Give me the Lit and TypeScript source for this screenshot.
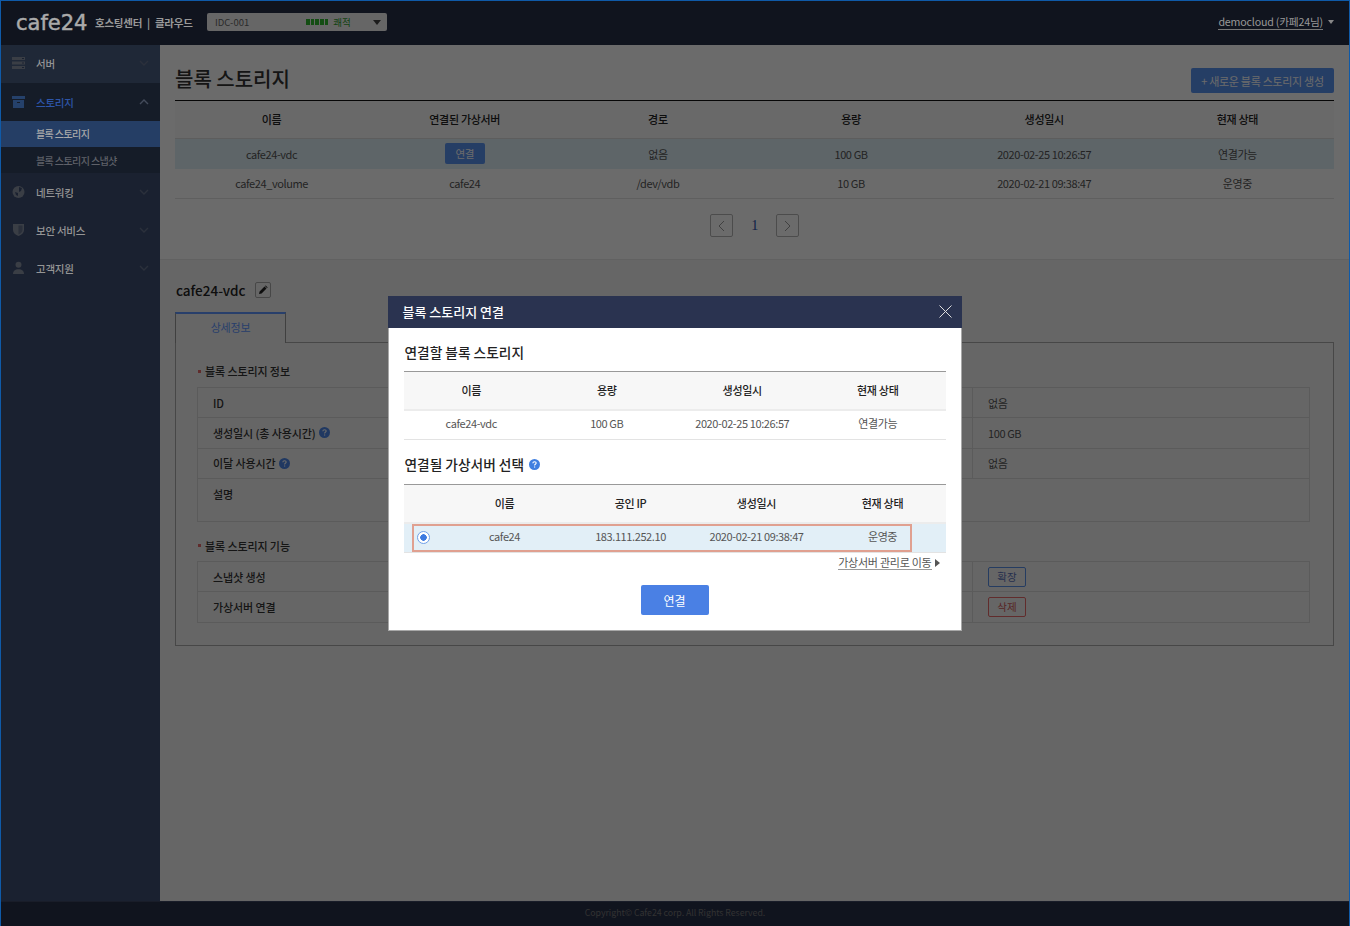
import { LitElement, css, html, svg } from "lit";
import { customElement } from "lit/decorators.js";

const chevron = (up = false) => html`<svg class="chev" viewBox="0 0 10 6" width="10" height="6">
  <path d=${up ? "M1 5l4-4 4 4" : "M1 1l4 4 4-4"} fill="none" stroke="currentColor" stroke-width="1.4" />
</svg>`;

const icons = {
  server: svg`<path d="M0 1h13v3H0zM0 5.500h13v3H0zM0 10h13v3H0z" fill="currentColor"/><path d="M10 2.500h2M10 7h2M10 11.500h2" stroke="#3e4f72"/>`,
  box: svg`<path d="M0 1h13v3H0z" fill="currentColor"/><path d="M1 5h11v8H1z" fill="currentColor"/><path d="M5 7h3v1H5z" fill="#34435f"/>`,
  globe: svg`<circle cx="6.500" cy="7" r="6" fill="currentColor"/><path d="M7 2l3 1-1 3-2 1zM3 7l3 1 0 3-2-1z" fill="#3e4f72"/>`,
  shield: svg`<path d="M1 1h11v6c0 3-2.500 5-5.500 6C3.500 12 1 10 1 7z" fill="currentColor"/><path d="M6.500 2.500h4V7c0 2-2 3.700-4 4.500z" fill="#3e4f72" opacity=".5"/>`,
  person: svg`<circle cx="6.500" cy="3.800" r="3" fill="currentColor"/><path d="M1 13c0-3 2-4.800 5.500-4.800S12 10 12 13z" fill="currentColor"/>`,
};

const menuIcon = (body: unknown) => html`<svg class="menu-icon" viewBox="0 0 13 14" width="13" height="14">${body}</svg>`;

const help = html`<svg class="help" viewBox="0 0 11 11" width="11" height="11">
  <circle cx="5.500" cy="5.500" r="5.500" fill="currentColor" />
  <path d="M3.800 4.200c.1-1 .8-1.500 1.700-1.500s1.700.5 1.700 1.400c0 1.200-1.600 1.200-1.600 2.300" fill="none" stroke="#fff" stroke-width="1.100" />
  <path d="M5 7.400h1.200v1.200H5z" fill="#fff" />
</svg>`;

@customElement("app-root")
export class AppRoot extends LitElement {
  static styles = css`
    :host {
      display: block;
      height: 100vh;
      font-family: "Noto Sans CJK KR", "Noto Sans", sans-serif;
      font-size: 11px;
      letter-spacing: -0.4px;
      color: #555;
    }
    * {
      box-sizing: border-box;
    }
    .app {
      position: relative;
      display: flex;
      flex-direction: column;
      height: 100%;
      border: 1px solid #0f5aa8;
      border-bottom: 0;
      overflow: hidden;
    }
    /* text that stays bright on the dark chrome while the dialog is open */
    .lit {
      position: relative;
      z-index: 11;
    }

    /* top bar */
    .topbar {
      display: flex;
      align-items: center;
      flex: none;
      height: 44px;
      padding: 0 15px 2px;
      background: #273049;
      color: #fff;
    }
    .logo {
      width: 79px;
      padding-top: 2px;
      font-family: "DejaVu Sans", sans-serif;
      font-size: 21px;
      font-weight: 400;
      letter-spacing: 0;
      color: #aaa;
      -webkit-text-stroke: 0.5px #aaa;
    }
    .product {
      font-size: 10.500px;
      font-weight: 700;
      letter-spacing: -0.25px;
      display: flex;
      gap: 5px;
      width: 112px;
      color: #999;
    }
    .idc {
      display: flex;
      align-items: center;
      width: 180px;
      height: 18px;
      padding: 0 6px 0 8px;
      background: #f4f4f4;
      border-radius: 2px;
      font-size: 9.500px;
      letter-spacing: 0;
      color: #666;
    }
    .idc .bars {
      margin-left: 57px;
      display: flex;
      gap: 1px;
    }
    .idc .bars i {
      width: 3.600px;
      height: 6px;
      background: #2eb82e;
    }
    .idc .state {
      margin-left: 5px;
      color: #2e9e2e;
      flex: 1;
    }
    .caret {
      width: 0;
      height: 0;
      border-left: 4px solid transparent;
      border-right: 4px solid transparent;
      border-top: 5px solid #444;
    }
    .user {
      margin-left: auto;
      display: flex;
      align-items: center;
      gap: 5px;
      font-size: 10.700px;
      letter-spacing: -0.2px;
      color: #999;
    }
    .user span {
      border-bottom: 1px solid #777;
      line-height: 15px;
    }
    .user .caret {
      border-left-width: 3.500px;
      border-right-width: 3.500px;
      border-top: 4px solid #888;
    }

    .body {
      flex: 1;
      display: flex;
      min-height: 0;
    }

    /* side menu */
    .side {
      flex: none;
      width: 159px;
      background: #3e4f72;
    }
    .menu {
      display: flex;
      align-items: center;
      height: 38px;
      padding: 0 11px;
      color: #959595;
      font-size: 10.500px;
      font-weight: 500;
      letter-spacing: -0.25px;
    }
    .menu.hover {
      padding-bottom: 2px;
      background: #4a5f83;
    }
    .menu.open {
      background: #34435f;
      color: #2d55a8;
    }
    .menu-icon {
      flex: none;
      margin-right: 11px;
      color: #8a93a5;
    }
    .menu.open .menu-icon {
      color: #5a9bff;
    }
    .chev {
      margin-left: auto;
      color: #66748e;
    }
    .menu.open .chev {
      color: #9fb4d8;
    }
    .sub {
      display: flex;
      align-items: center;
      height: 26px;
      padding-left: 35px;
      background: #34435f;
      color: #5f6169;
      font-size: 10px;
      font-weight: 500;
      letter-spacing: -0.6px;
    }
    .sub.active {
      background: #5a93f0;
      color: #aaa;
      padding-bottom: 1px;
    }

    /* content */
    .main {
      flex: 1;
      min-width: 0;
      background: #f3f3f3;
    }
    .list {
      height: 215px;
      padding: 0 15px;
      background: #fff;
      border-bottom: 1px solid #e6e6e6;
    }
    .title-row {
      display: flex;
      justify-content: space-between;
      align-items: flex-start;
      height: 55px;
      padding-top: 23px;
    }
    h1 {
      margin: -4px 0 0;
      font-size: 20px;
      font-weight: 500;
      line-height: 30px;
      letter-spacing: 0;
      color: #333;
    }
    .btn-new {
      height: 25px;
      width: 143px;
      padding: 0;
      border: 0;
      border-radius: 2px;
      background: #5a93f0;
      color: #fff;
      font: inherit;
      font-size: 11px;
      letter-spacing: -0.3px;
      white-space: nowrap;
    }
    table {
      width: 100%;
      border-collapse: collapse;
      table-layout: fixed;
      text-align: center;
    }
    th {
      padding: 0;
      font-weight: 500;
      color: #222;
      font-size: 11px;
      letter-spacing: -0.3px;
    }
    td {
      padding: 0;
    }
    .list-table {
      border-top: 1px solid #111;
    }
    .list-table th {
      height: 38px;
      padding-bottom: 2px;
      border-bottom: 1px solid #ddd;
      background: #fbfbfb;
    }
    .list-table td {
      height: 30px;
      border-bottom: 1px solid #e3e3e3;
    }
    .list-table tr.on td {
      background: #dff0f8;
      border-bottom: 0;
    }
    .link-btn {
      display: inline-block;
      width: 40px;
      height: 21px;
      line-height: 21px;
      border-radius: 2px;
      background: #5a93f0;
      color: #fff;
      font-size: 10.500px;
      vertical-align: middle;
    }
    .pager {
      display: flex;
      justify-content: center;
      align-items: center;
      margin-top: 15px;
    }
    .pager button {
      display: flex;
      align-items: center;
      justify-content: center;
      width: 23px;
      height: 23px;
      padding: 0;
      border: 1px solid #b5b5b5;
      border-radius: 2px;
      background: transparent;
      color: #999;
    }
    .pager b {
      width: 43px;
      text-align: center;
      font-family: "Liberation Serif", serif;
      font-weight: 400;
      font-size: 14px;
      color: #2a50a8;
    }
    .detail {
      padding: 0 15px;
      height: 408px;
    }
    .detail-head {
      display: flex;
      align-items: center;
      gap: 9px;
      height: 52px;
      padding-top: 8px;
    }
    h2 {
      margin: 0 0 0 1px;
      font-size: 13.500px;
      font-weight: 500;
      letter-spacing: 0;
      color: #222;
    }
    .edit {
      display: flex;
      align-items: center;
      justify-content: center;
      width: 16px;
      height: 16px;
      border: 1px solid #aaa;
      border-radius: 2px;
      color: #222;
    }
    .tab {
      position: relative;
      width: 111px;
      height: 31px;
      margin-bottom: -1px;
      border: 1px solid #999;
      border-top: 2px solid #5f96ff;
      border-bottom: 0;
      background: #f3f3f3;
      color: #5f96ff;
      text-align: center;
      font-size: 11px;
      letter-spacing: -0.2px;
      line-height: 27px;
    }
    .panel {
      height: 304px;
      padding: 20px 23px 0 21px;
      border: 1px solid #aaa;
    }
    .sec-label {
      display: flex;
      align-items: center;
      height: 16px;
      font-size: 11px;
      font-weight: 500;
      letter-spacing: -0.1px;
      color: #333;
    }
    .sec-label::before {
      content: "";
      width: 3px;
      height: 3px;
      margin: 0 4px 0 1px;
      background: #e46a6a;
    }
    .sec-label.second {
      margin-top: 16px;
    }
    .info {
      margin-top: 8px;
      border: 1px solid #d8d8d8;
      border-bottom: 0;
    }
    .sec-label.second + .info {
      margin-top: 7px;
    }
    .info-row {
      display: grid;
      grid-template-columns: 190px 1fr 337px;
      align-items: stretch;
      height: 30.330px;
      border-bottom: 1px solid #d8d8d8;
    }
    .info-row.tall {
      height: 43px;
    }
    .info-row > div {
      display: flex;
      align-items: center;
      gap: 3px;
      padding-left: 15px;
    }
    .info-row .key {
      font-weight: 500;
      font-size: 11px;
      letter-spacing: -0.1px;
      color: #333;
      white-space: nowrap;
    }
    .info-row .val {
      border-left: 1px solid #d8d8d8;
    }
    .info-row.tall .key {
      align-items: flex-start;
      padding-top: 7px;
    }
    .info-row.tall .val {
      border-left: 0;
    }
    .help {
      color: #4d87e8;
      flex: none;
    }
    .outline {
      width: 38px;
      height: 20px;
      padding: 0;
      border: 1px solid #5a8fe8;
      border-radius: 2px;
      background: transparent;
      color: #5a70b8;
      font: inherit;
      font-size: 10.500px;
    }
    .outline.red {
      border-color: #e86a6a;
      color: #d05a5a;
    }
    .copyright {
      flex: none;
      height: 25px;
      border-top: 1px solid #3c4763;
      background: #273049;
      color: #777;
      text-align: center;
      font-size: 8.800px;
      letter-spacing: -0.05px;
      line-height: 21px;
    }

    /* dialog */
    .overlay {
      position: absolute;
      inset: 0;
      z-index: 10;
      display: flex;
      justify-content: center;
      align-items: flex-start;
      padding-top: 295px;
      background: rgba(0, 0, 0, 0.58);
    }
    .dialog {
      width: 574px;
      height: 335px;
      margin-left: -1px;
      border: 1px solid #a8a8a8;
      border-top: 0;
      background: #fff;
    }
    .dialog-head {
      display: flex;
      align-items: center;
      justify-content: space-between;
      height: 32px;
      margin: 0 -1px;
      padding: 0 10px 2px 15px;
      background: #2a3350;
      color: #fff;
      font-size: 13px;
      font-weight: 500;
      letter-spacing: 0;
    }
    .dialog-body {
      padding: 0 15px;
    }
    h3 {
      display: flex;
      align-items: center;
      gap: 4px;
      margin: 0;
      height: 43px;
      padding: 4px 0 0 1px;
      font-size: 13.700px;
      font-weight: 500;
      letter-spacing: 0;
      color: #222;
    }
    .pick + h3 {
      height: 44px;
    }
    h3 .help {
      margin-left: 1px;
      color: #3f7fe0;
    }
    .pick {
      border-top: 1px solid #999;
    }
    .pick th {
      height: 38px;
      background: #f7f7f7;
      border-bottom: 2px solid #ececec;
    }
    .pick td {
      height: 30px;
      padding-bottom: 4px;
      border-bottom: 1px solid #e3e3e3;
    }
    .servers {
      position: relative;
    }
    .servers tr.on td {
      background: #e2eff7;
    }
    .radio {
      display: inline-block;
      width: 13px;
      height: 13px;
      margin-left: 1px;
      border: 1px solid #6f9fe8;
      border-radius: 50%;
      background: radial-gradient(circle, #3d7ae0 0 3px, #fff 3.500px);
      vertical-align: middle;
    }
    .mark {
      position: absolute;
      left: 8px;
      top: 40px;
      width: 500px;
      height: 28px;
      border: 2px solid #e0a090;
      pointer-events: none;
    }
    .goto {
      display: flex;
      justify-content: flex-end;
      align-items: center;
      gap: 3px;
      height: 20px;
      padding-right: 6px;
      font-size: 11px;
      letter-spacing: -0.25px;
      color: #555;
    }
    .goto span {
      border-bottom: 1px solid #999;
      line-height: 13px;
    }
    .goto i {
      width: 0;
      height: 0;
      border-top: 4px solid transparent;
      border-bottom: 4px solid transparent;
      border-left: 5px solid #555;
    }
    .actions {
      display: flex;
      justify-content: center;
      margin-top: 12px;
    }
    .confirm {
      width: 68px;
      height: 30px;
      border: 0;
      border-radius: 2px;
      background: #4a80e4;
      color: #fff;
      font: inherit;
      font-size: 12px;
      letter-spacing: 0;
    }
  `;

  render() {
    return html`
      <div class="app">
        <header class="topbar">
          <div class="logo lit">cafe24</div>
          <div class="product lit"><span>호스팅센터</span><span>|</span><span>클라우드</span></div>
          <div class="idc">
            <span>IDC-001</span>
            <span class="bars"><i></i><i></i><i></i><i></i><i></i></span>
            <span class="state">쾌적</span>
            <span class="caret"></span>
          </div>
          <div class="user lit"><span>democloud (카페24님)</span><i class="caret"></i></div>
        </header>
        <div class="body">
          <nav class="side">
            <div class="menu hover">${menuIcon(icons.server)}<span class="lit">서버</span>${chevron()}</div>
            <div class="menu open">${menuIcon(icons.box)}<span class="lit">스토리지</span>${chevron(true)}</div>
            <div class="sub active"><span class="lit">블록 스토리지</span></div>
            <div class="sub"><span class="lit">블록 스토리지 스냅샷</span></div>
            <div class="menu">${menuIcon(icons.globe)}<span class="lit">네트워킹</span>${chevron()}</div>
            <div class="menu">${menuIcon(icons.shield)}<span class="lit">보안 서비스</span>${chevron()}</div>
            <div class="menu">${menuIcon(icons.person)}<span class="lit">고객지원</span>${chevron()}</div>
          </nav>
          <main class="main">
            <section class="list">
              <div class="title-row">
                <h1>블록 스토리지</h1>
                <button class="btn-new">+ 새로운 블록 스토리지 생성</button>
              </div>
              <table class="list-table">
                <thead>
                  <tr>
                    <th>이름</th>
                    <th>연결된 가상서버</th>
                    <th>경로</th>
                    <th>용량</th>
                    <th>생성일시</th>
                    <th>현재 상태</th>
                  </tr>
                </thead>
                <tbody>
                  <tr class="on">
                    <td>cafe24-vdc</td>
                    <td><span class="link-btn">연결</span></td>
                    <td>없음</td>
                    <td>100 GB</td>
                    <td>2020-02-25 10:26:57</td>
                    <td>연결가능</td>
                  </tr>
                  <tr>
                    <td>cafe24_volume</td>
                    <td>cafe24</td>
                    <td>/dev/vdb</td>
                    <td>10 GB</td>
                    <td>2020-02-21 09:38:47</td>
                    <td>운영중</td>
                  </tr>
                </tbody>
              </table>
              <div class="pager">
                <button>
                  <svg viewBox="0 0 7 12" width="7" height="12"><path d="M6 1L1 6l5 5" fill="none" stroke="currentColor" /></svg>
                </button>
                <b>1</b>
                <button>
                  <svg viewBox="0 0 7 12" width="7" height="12"><path d="M1 1l5 5-5 5" fill="none" stroke="currentColor" /></svg>
                </button>
              </div>
            </section>
            <section class="detail">
              <div class="detail-head">
                <h2>cafe24-vdc</h2>
                <span class="edit">
                  <svg viewBox="0 0 10 10" width="10" height="10"><path d="M1 9l.6-2.600L6.500 1.500l2 2L3.600 8.400zM7 1l.7-.6 2 2L9 3z" fill="currentColor" /></svg>
                </span>
              </div>
              <div class="tab">상세정보</div>
              <div class="panel">
                <div class="sec-label">블록 스토리지 정보</div>
                <div class="info">
                  <div class="info-row"><div class="key">ID</div><div></div><div class="val">없음</div></div>
                  <div class="info-row"><div class="key">생성일시 (총 사용시간) ${help}</div><div></div><div class="val">100 GB</div></div>
                  <div class="info-row"><div class="key">이달 사용시간 ${help}</div><div></div><div class="val">없음</div></div>
                  <div class="info-row tall"><div class="key">설명</div><div></div><div class="val"></div></div>
                </div>
                <div class="sec-label second">블록 스토리지 기능</div>
                <div class="info">
                  <div class="info-row"><div class="key">스냅샷 생성</div><div></div><div class="val"><button class="outline">확장</button></div></div>
                  <div class="info-row"><div class="key">가상서버 연결</div><div></div><div class="val"><button class="outline red">삭제</button></div></div>
                </div>
              </div>
            </section>
          </main>
        </div>
        <footer class="copyright">Copyright© Cafe24 corp. All Rights Reserved.</footer>

        <div class="overlay">
          <div class="dialog">
            <div class="dialog-head">
              <span>블록 스토리지 연결</span>
              <svg viewBox="0 0 13 13" width="13" height="13"><path d="M.5.5l12 12M12.500.5l-12 12" stroke="#ddd" fill="none" /></svg>
            </div>
            <div class="dialog-body">
              <h3>연결할 블록 스토리지</h3>
              <table class="pick">
                <thead>
                  <tr><th>이름</th><th>용량</th><th>생성일시</th><th>현재 상태</th></tr>
                </thead>
                <tbody>
                  <tr>
                    <td>cafe24-vdc</td>
                    <td>100 GB</td>
                    <td>2020-02-25 10:26:57</td>
                    <td>연결가능</td>
                  </tr>
                </tbody>
              </table>
              <h3>연결될 가상서버 선택 ${help}</h3>
              <div class="servers">
                <table class="pick">
                  <colgroup><col style="width:38px" /><col /><col /><col /><col /></colgroup>
                  <thead>
                    <tr><th></th><th>이름</th><th>공인 IP</th><th>생성일시</th><th>현재 상태</th></tr>
                  </thead>
                  <tbody>
                    <tr class="on">
                      <td><span class="radio"></span></td>
                      <td>cafe24</td>
                      <td>183.111.252.10</td>
                      <td>2020-02-21 09:38:47</td>
                      <td>운영중</td>
                    </tr>
                  </tbody>
                </table>
                <div class="mark"></div>
              </div>
              <div class="goto"><span>가상서버 관리로 이동</span><i></i></div>
              <div class="actions"><button class="confirm">연결</button></div>
            </div>
          </div>
        </div>
      </div>
    `;
  }
}
